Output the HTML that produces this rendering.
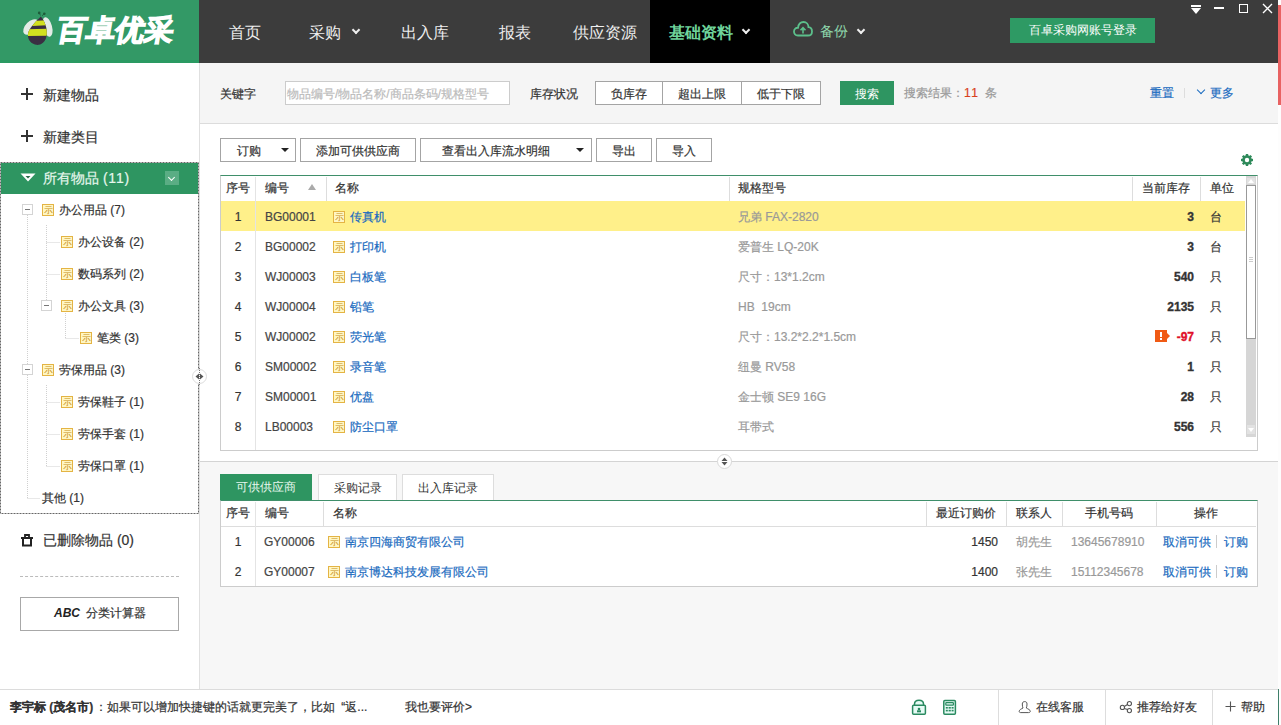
<!DOCTYPE html>
<html><head><meta charset="utf-8">
<style>
*{box-sizing:border-box;margin:0;padding:0}
html,body{width:1281px;height:725px;overflow:hidden;background:#fff}
body{position:relative;font-family:"Liberation Sans",sans-serif;font-size:12px;color:#333}
.a{position:absolute;white-space:nowrap}
.nav{position:absolute;top:23px;font-size:16px;line-height:20px;color:#eee;white-space:nowrap}
.chev{position:absolute;width:6px;height:6px;border-right:2px solid #eee;border-bottom:2px solid #eee;transform:rotate(45deg)}
.plus{position:absolute;width:12px;height:12px}
.plus:before{content:"";position:absolute;left:0;top:5px;width:12px;height:2px;background:#333}
.plus:after{content:"";position:absolute;left:5px;top:0;width:2px;height:12px;background:#333}
.ti{position:absolute;font-size:12px;line-height:16px;color:#333;white-space:nowrap}
.ic{position:absolute;width:12px;height:12px;border:1px solid #e4b444;background:#fff6c4}
.ic:after{content:"示";position:absolute;left:1px;top:0;font-size:9px;line-height:10px;color:#c89018}
.mb{position:absolute;width:11px;height:11px;border:1px solid #d4d4d4;background:#fff}
.mb:after{content:"";position:absolute;left:2px;top:4px;width:5px;height:1px;background:#777}
.vl{position:absolute;width:0;border-left:1px dotted #c4c4c4}
.hl{position:absolute;height:0;border-top:1px dotted #c4c4c4}
.btn{position:absolute;height:24px;border:1px solid #a4a4a4;background:#fff;font-size:12px;line-height:24px;color:#333;text-align:center;white-space:nowrap}
.caret{position:absolute;width:0;height:0;border-left:4px solid transparent;border-right:4px solid transparent;border-top:4px solid #222}
.hd{position:absolute;font-size:12px;line-height:16px;color:#333;white-space:nowrap}
.cl{position:absolute;width:1px;background:#ddd}
.rl{position:absolute;height:1px;background:#ddd}
.hd,.ti,.btn{-webkit-text-stroke:0.2px currentColor}
.lk{color:#1a6bc0}
.gy{color:#999}
.b{font-weight:bold;-webkit-text-stroke:0.35px currentColor}
</style></head><body>
<!-- backgrounds -->
<div class="a" style="left:0;top:0;width:1278px;height:63px;background:#3c3c3c"></div>
<div class="a" style="left:0;top:0;width:199px;height:63px;background:#339966"></div><div class="a" style="left:0;top:60px;width:199px;height:3px;background:#2a9a62"></div>
<div class="a" style="left:0;top:63px;width:199px;height:626px;background:#fff"></div>
<div class="a" style="left:199px;top:63px;width:1px;height:626px;background:#e0e0e0"></div>
<div class="a" style="left:200px;top:63px;width:1078px;height:60px;background:#f5f5f5"></div>
<div class="a" style="left:200px;top:123px;width:1078px;height:1px;background:#dcdcdc"></div>
<div class="a" style="left:200px;top:124px;width:1078px;height:337px;background:#fff"></div>
<div class="a" style="left:200px;top:461px;width:1078px;height:1px;background:#d4d4d4"></div>
<div class="a" style="left:200px;top:462px;width:1078px;height:227px;background:#f7f7f7"></div>
<div class="a" style="left:0;top:689px;width:1278px;height:1px;background:#dcdcdc"></div>
<div class="a" style="left:0;top:690px;width:1278px;height:35px;background:#fff"></div>
<div class="a" style="left:1278px;top:0;width:3px;height:725px;background:#fdfdfd"></div><div class="a" style="left:1278px;top:689px;width:1px;height:36px;background:#3f7f6a"></div>
<div class="a" style="left:1278px;top:5px;width:3px;height:100px;background:#e86262"></div>

<svg class="a" style="left:20px;top:8px" width="40" height="42" viewBox="20 8 40 42">
<circle cx="39.2" cy="12.9" r="1.3" fill="#1d5a3a"/><circle cx="44.3" cy="13.8" r="1.3" fill="#1d5a3a"/>
<path d="M40.5 15.5 L39.5 13.5 M42 15.8 L44 14" stroke="#1d5a3a" stroke-width="0.8"/>
<ellipse cx="31" cy="27" rx="5.5" ry="9.5" transform="rotate(45 31 27)" fill="#e4ebe6"/>
<ellipse cx="47.5" cy="27" rx="4.5" ry="10" transform="rotate(-15 47.5 27)" fill="#e4ebe6"/>
<clipPath id="bc"><path d="M40.8 16.5 C44 20 48 28 46.5 36 C45.5 43 40 45.5 36 44.8 C31 44 27.5 40 28 34 C28.5 29 35 22 40.8 16.5 Z"/></clipPath>
<g clip-path="url(#bc)">
<rect x="20" y="10" width="40" height="40" fill="#3a2e42"/>
<path d="M20 21.5 L60 19.5 L60 24.5 L20 26.5 Z" fill="#d2e020"/>
<path d="M20 29.5 L60 28.5 L60 35.5 L20 36 Z" fill="#d2e020"/>
</g>
</svg>
<div class="a" style="left:55px;top:13px;font-size:29px;line-height:34px;font-weight:900;color:#fff;-webkit-text-stroke:1.3px #fff;transform:skewX(-10deg);transform-origin:0 100%;letter-spacing:0px">百卓优采</div>
<!-- header nav -->
<div class="nav" style="left:229px">首页</div>
<div class="nav" style="left:309px">采购</div><div class="chev" style="left:353px;top:27px"></div>
<div class="nav" style="left:401px">出入库</div>
<div class="nav" style="left:499px">报表</div>
<div class="nav" style="left:573px">供应资源</div>
<div class="a" style="left:650px;top:0;width:120px;height:63px;background:#000"></div>
<div class="nav" style="left:669px;color:#6fd49b;font-weight:bold">基础资料</div><div class="chev" style="left:743px;top:27px"></div>
<div class="nav" style="left:820px;top:21px;font-size:14px;color:#8fd8ac">备份</div><div class="chev" style="left:858px;top:27px"></div>
<div class="a" style="left:1010px;top:18px;width:145px;height:25px;background:#2e9a64;color:#fff;font-size:12px;line-height:25px;text-align:center">百卓采购网账号登录</div>

<div class="a" style="left:1191px;top:5px;width:10px;height:2px;background:#fff"></div>
<div class="a" style="left:1191px;top:8px;width:0;height:0;border-left:5px solid transparent;border-right:5px solid transparent;border-top:6px solid #fff"></div>
<div class="a" style="left:1214px;top:7px;width:10px;height:1.5px;background:#fff"></div>
<div class="a" style="left:1239px;top:4px;width:9px;height:9px;border:1.5px solid #fff"></div>
<svg class="a" style="left:1262px;top:3px" width="11" height="11"><path d="M1 1 L10 10 M10 1 L1 10" stroke="#fff" stroke-width="1.4"/></svg>
<svg class="a" style="left:793px;top:21px" width="20" height="16" viewBox="0 0 20 16"><path d="M5 14.5 C2 14.5 1 12.5 1 10.5 C1 8 3 6.5 5 6.8 C5.5 3 8 1 10.5 1 C13.5 1 15.5 3.5 15.5 6.2 C17.8 6.4 19 8.3 19 10.4 C19 12.8 17.5 14.5 15 14.5 Z" fill="none" stroke="#5cbf8b" stroke-width="1.8"/><path d="M10 12.5 V7 M7.5 9.2 L10 6.7 L12.5 9.2" fill="none" stroke="#5cbf8b" stroke-width="1.6"/></svg>
<!-- sidebar -->
<div class="plus" style="left:21px;top:88px"></div><div class="ti" style="left:43px;top:87px;font-size:14px">新建物品</div>
<div class="plus" style="left:21px;top:130px"></div><div class="ti" style="left:43px;top:129px;font-size:14px">新建类目</div>
<svg class="a" style="left:0;top:162px" width="199" height="352"><rect x="0.5" y="0.5" width="198" height="351" fill="none" stroke="#666" stroke-dasharray="2 1"/></svg>
<div class="a" style="left:1px;top:163px;width:197px;height:31px;background:#2e9561"></div>
<div class="ti" style="left:43px;top:170px;font-size:14px;color:#e6f7ed">所有物品 <span style="letter-spacing:0.8px">(11)</span></div>
<div class="a" style="left:165px;top:171px;width:14px;height:14px;background:#5aad84"></div>

<svg class="a" style="left:0;top:0" width="200" height="689">
<g stroke="#d0d0d0" stroke-width="1" stroke-dasharray="1 1" fill="none">
<path d="M27.5 215 V498 M27.5 498.5 H40"/>
<path d="M46.5 225 V300 M46.5 242.5 H60 M46.5 274.5 H60"/>
<path d="M65.5 311 V338 M65.5 338.5 H79"/>
<path d="M46.5 385 V466 M46.5 402.5 H60 M46.5 434.5 H60 M46.5 466.5 H60"/>
</g>
</svg>
<svg class="a" style="left:19px;top:172px" width="18" height="11"><path d="M1.5 1.5 H16.5 L9 9.5 Z" fill="#fff"/><path d="M6.5 4 H11.5 L9 6.6 Z" fill="#2d6a4a"/></svg>
<div class="a" style="left:169px;top:175px;width:5px;height:5px;border-right:1.3px solid #fff;border-bottom:1.3px solid #fff;transform:rotate(45deg)"></div>
<svg class="a" style="left:19px;top:532px" width="16" height="16" viewBox="19 532 16 16"><path d="M25 537.5 V535 H29 V537.5" fill="none" stroke="#222" stroke-width="1.8"/><path d="M21 538 H33" stroke="#222" stroke-width="2"/><path d="M23 539 V545.5 H31 V539" fill="none" stroke="#222" stroke-width="2"/></svg>
<div class="mb" style="left:22px;top:204px"></div><div class="ic" style="left:42px;top:204px"></div><div class="ti" style="left:59px;top:202px">办公用品 (7)</div>
<div class="ic" style="left:61px;top:236px"></div><div class="ti" style="left:78px;top:234px">办公设备 (2)</div>
<div class="ic" style="left:61px;top:268px"></div><div class="ti" style="left:78px;top:266px">数码系列 (2)</div>
<div class="mb" style="left:41px;top:300px"></div><div class="ic" style="left:61px;top:300px"></div><div class="ti" style="left:78px;top:298px">办公文具 (3)</div>
<div class="ic" style="left:80px;top:332px"></div><div class="ti" style="left:97px;top:330px">笔类 (3)</div>
<div class="mb" style="left:22px;top:364px"></div><div class="ic" style="left:42px;top:364px"></div><div class="ti" style="left:59px;top:362px">劳保用品 (3)</div>
<div class="ic" style="left:61px;top:396px"></div><div class="ti" style="left:78px;top:394px">劳保鞋子 (1)</div>
<div class="ic" style="left:61px;top:428px"></div><div class="ti" style="left:78px;top:426px">劳保手套 (1)</div>
<div class="ic" style="left:61px;top:460px"></div><div class="ti" style="left:78px;top:458px">劳保口罩 (1)</div>
<div class="ti" style="left:42px;top:490px">其他 (1)</div>

<div class="ti" style="left:43px;top:532px;font-size:14px">已删除物品 (0)</div>
<div class="a" style="left:20px;top:576px;width:159px;height:0;border-top:1px dashed #bbb"></div>
<div class="a" style="left:20px;top:597px;width:159px;height:34px;border:1px solid #a8a8a8;background:#fff"></div>
<div class="a" style="left:54px;top:605px;font-size:12px;line-height:16px;font-style:italic;font-weight:bold;color:#222">ABC</div>
<div class="ti" style="left:86px;top:605px">分类计算器</div>

<svg class="a" style="left:191px;top:368px" width="17" height="17"><circle cx="8.5" cy="8.5" r="7" fill="#fff" stroke="#dcdcdc"/><path d="M4.5 8.5 L8 5.5 V11.5 Z M12.5 8.5 L9 5.5 V11.5 Z" fill="#555"/><path d="M8.5 0 V17" stroke="#777" stroke-dasharray="1 1"/></svg>
<svg class="a" style="left:716px;top:453px" width="17" height="17"><circle cx="8.5" cy="8.5" r="7" fill="#fff" stroke="#d8d8d8"/><path d="M8.5 4.5 L5.5 8 H11.5 Z M8.5 12.5 L5.5 9 H11.5 Z" fill="#555"/></svg>
<!-- search panel -->
<div class="hd" style="left:220px;top:86px">关键字</div>
<div class="a" style="left:285px;top:81px;width:225px;height:24px;border:1px solid #ccc;background:#fff"></div>
<div class="hd" style="left:287px;top:86px;color:#bbb">物品编号/物品名称/商品条码/规格型号</div>
<div class="hd" style="left:530px;top:86px">库存状况</div>
<div class="btn" style="left:595px;top:81px;width:68px">负库存</div>
<div class="btn" style="left:662px;top:81px;width:80px">超出上限</div>
<div class="btn" style="left:741px;top:81px;width:80px">低于下限</div>
<div class="a" style="left:840px;top:81px;width:54px;height:24px;background:#2e9561;color:#fff;text-align:center;line-height:26px">搜索</div>
<div class="hd" style="left:904px;top:85px;color:#999">搜索结果：<span style="color:#d8401c;letter-spacing:1.5px">11</span><span style="margin-left:6px">条</span></div>
<div class="hd lk" style="left:1150px;top:85px">重置</div>
<div class="a" style="left:1184px;top:88px;width:1px;height:10px;background:#ddd"></div>
<div class="a" style="left:1198px;top:87px;width:6px;height:6px;border-right:1px solid #1a6bc0;border-bottom:1px solid #1a6bc0;transform:rotate(45deg)"></div>
<div class="hd lk" style="left:1210px;top:85px">更多</div>

<!-- toolbar -->
<div class="btn" style="left:220px;top:138px;width:76px;text-align:left;padding-left:16px">订购</div><div class="caret" style="left:281px;top:148px"></div>
<div class="btn" style="left:300px;top:138px;width:116px">添加可供供应商</div>
<div class="btn" style="left:420px;top:138px;width:172px;text-align:left;padding-left:21px">查看出入库流水明细</div><div class="caret" style="left:576px;top:148px"></div>
<div class="btn" style="left:596px;top:138px;width:56px">导出</div>
<div class="btn" style="left:656px;top:138px;width:56px">导入</div>
<svg class="a" style="left:1240px;top:153px" width="14" height="14" viewBox="-7 -7 14 14"><g fill="#2e8a5a"><rect x="-1.2" y="-6" width="2.4" height="12"/><rect x="-1.2" y="-6" width="2.4" height="12" transform="rotate(45)"/><rect x="-1.2" y="-6" width="2.4" height="12" transform="rotate(90)"/><rect x="-1.2" y="-6" width="2.4" height="12" transform="rotate(135)"/></g><circle r="3.6" fill="none" stroke="#2e8a5a" stroke-width="2.4"/><circle r="2.2" fill="#fff"/></svg>

<!-- upper table -->
<div class="a" style="left:220px;top:175px;width:1038px;height:276px;border:1px solid #ccc;border-top:1px solid #3f8f6a;background:#fff"></div>
<div class="rl" style="left:221px;top:201px;width:1024px"></div>
<div class="a" style="left:221px;top:201px;width:1024px;height:30px;background:#fff08a"></div>
<div class="cl" style="left:255px;top:177px;height:273px;background:#e4e4e4"></div>
<div class="cl" style="left:326px;top:177px;height:24px"></div>
<div class="cl" style="left:729px;top:177px;height:24px"></div>
<div class="cl" style="left:1132px;top:177px;height:24px"></div>
<div class="cl" style="left:1200px;top:177px;height:24px"></div>
<div class="hd" style="left:226px;top:180px">序号</div>
<div class="hd" style="left:265px;top:180px">编号</div>
<div class="a" style="left:308px;top:184px;width:0;height:0;border-left:4px solid transparent;border-right:4px solid transparent;border-bottom:6px solid #aaa"></div>
<div class="hd" style="left:335px;top:180px">名称</div>
<div class="hd" style="left:738px;top:180px">规格型号</div>
<div class="hd" style="left:1142px;top:180px">当前库存</div>
<div class="hd" style="left:1210px;top:180px">单位</div>
<div class="hd" style="left:221px;top:209px;width:34px;text-align:center">1</div>
<div class="hd" style="left:265px;top:209px;color:#444">BG00001</div>
<div class="ic" style="left:333px;top:211px"></div><div class="hd lk" style="left:350px;top:209px">传真机</div>
<div class="hd gy" style="left:738px;top:209px">兄弟 FAX-2820</div>
<div class="hd b" style="left:1094px;top:209px;width:100px;text-align:right">3</div>
<div class="hd" style="left:1210px;top:209px">台</div>
<div class="hd" style="left:221px;top:239px;width:34px;text-align:center">2</div>
<div class="hd" style="left:265px;top:239px;color:#444">BG00002</div>
<div class="ic" style="left:333px;top:241px"></div><div class="hd lk" style="left:350px;top:239px">打印机</div>
<div class="hd gy" style="left:738px;top:239px">爱普生 LQ-20K</div>
<div class="hd b" style="left:1094px;top:239px;width:100px;text-align:right">3</div>
<div class="hd" style="left:1210px;top:239px">台</div>
<div class="hd" style="left:221px;top:269px;width:34px;text-align:center">3</div>
<div class="hd" style="left:265px;top:269px;color:#444">WJ00003</div>
<div class="ic" style="left:333px;top:271px"></div><div class="hd lk" style="left:350px;top:269px">白板笔</div>
<div class="hd gy" style="left:738px;top:269px">尺寸：13*1.2cm</div>
<div class="hd b" style="left:1094px;top:269px;width:100px;text-align:right">540</div>
<div class="hd" style="left:1210px;top:269px">只</div>
<div class="hd" style="left:221px;top:299px;width:34px;text-align:center">4</div>
<div class="hd" style="left:265px;top:299px;color:#444">WJ00004</div>
<div class="ic" style="left:333px;top:301px"></div><div class="hd lk" style="left:350px;top:299px">铅笔</div>
<div class="hd gy" style="left:738px;top:299px">HB&nbsp; 19cm</div>
<div class="hd b" style="left:1094px;top:299px;width:100px;text-align:right">2135</div>
<div class="hd" style="left:1210px;top:299px">只</div>
<div class="hd" style="left:221px;top:329px;width:34px;text-align:center">5</div>
<div class="hd" style="left:265px;top:329px;color:#444">WJ00002</div>
<div class="ic" style="left:333px;top:331px"></div><div class="hd lk" style="left:350px;top:329px">荧光笔</div>
<div class="hd gy" style="left:738px;top:329px">尺寸：13.2*2.2*1.5cm</div>
<div class="a" style="left:1155px;top:330px;width:12px;height:12px;background:#f05a14"></div><div class="a" style="left:1167px;top:333px;width:0;height:0;border-top:3px solid transparent;border-bottom:3px solid transparent;border-left:3px solid #f05a14"></div><div class="a" style="left:1160px;top:332px;width:2px;height:5px;background:#fff"></div><div class="a" style="left:1160px;top:338px;width:2px;height:2px;background:#fff"></div>
<div class="hd b" style="left:1094px;top:329px;width:100px;text-align:right;color:#e0102a">-97</div>
<div class="hd" style="left:1210px;top:329px">只</div>
<div class="hd" style="left:221px;top:359px;width:34px;text-align:center">6</div>
<div class="hd" style="left:265px;top:359px;color:#444">SM00002</div>
<div class="ic" style="left:333px;top:361px"></div><div class="hd lk" style="left:350px;top:359px">录音笔</div>
<div class="hd gy" style="left:738px;top:359px">纽曼 RV58</div>
<div class="hd b" style="left:1094px;top:359px;width:100px;text-align:right">1</div>
<div class="hd" style="left:1210px;top:359px">只</div>
<div class="hd" style="left:221px;top:389px;width:34px;text-align:center">7</div>
<div class="hd" style="left:265px;top:389px;color:#444">SM00001</div>
<div class="ic" style="left:333px;top:391px"></div><div class="hd lk" style="left:350px;top:389px">优盘</div>
<div class="hd gy" style="left:738px;top:389px">金士顿 SE9 16G</div>
<div class="hd b" style="left:1094px;top:389px;width:100px;text-align:right">28</div>
<div class="hd" style="left:1210px;top:389px">只</div>
<div class="hd" style="left:221px;top:419px;width:34px;text-align:center">8</div>
<div class="hd" style="left:265px;top:419px;color:#444">LB00003</div>
<div class="ic" style="left:333px;top:421px"></div><div class="hd lk" style="left:350px;top:419px">防尘口罩</div>
<div class="hd gy" style="left:738px;top:419px">耳带式</div>
<div class="hd b" style="left:1094px;top:419px;width:100px;text-align:right">556</div>
<div class="hd" style="left:1210px;top:419px">只</div>
<!-- scrollbar -->
<div class="a" style="left:1246px;top:176px;width:10px;height:261px;background:#d6d6d6"></div>
<div class="a" style="left:1247px;top:178px;width:8px;height:6px;background:#e2e2e2"></div>
<div class="a" style="left:1248px;top:179px;width:0;height:0;border-left:3px solid transparent;border-right:3px solid transparent;border-bottom:4px solid #fff"></div>
<div class="a" style="left:1246px;top:185px;width:10px;height:154px;background:#fff;border:1px solid #999"></div>
<div class="a" style="left:1247px;top:425px;width:8px;height:9px;background:#e2e2e2"></div>
<div class="a" style="left:1248px;top:428px;width:0;height:0;border-left:3px solid transparent;border-right:3px solid transparent;border-top:4px solid #fff"></div>
<div class="a" style="left:1249px;top:257px;width:4px;height:1px;background:#ccc"></div><div class="a" style="left:1249px;top:259px;width:4px;height:1px;background:#ccc"></div><div class="a" style="left:1249px;top:261px;width:4px;height:1px;background:#ccc"></div>

<!-- lower tabs -->
<div class="a" style="left:220px;top:474px;width:92px;height:27px;background:#2e9561;color:#e6f7ed;text-align:center;line-height:26px">可供供应商</div>
<div class="a" style="left:318px;top:474px;width:79px;height:27px;background:#fff;border:1px solid #ddd;border-bottom:none;text-align:center;line-height:26px">采购记录</div>
<div class="a" style="left:402px;top:474px;width:92px;height:27px;background:#fff;border:1px solid #ddd;border-bottom:none;text-align:center;line-height:26px">出入库记录</div>
<div class="a" style="left:220px;top:500px;width:1038px;height:87px;border:1px solid #ccc;border-top:1px solid #3f8f6a;background:#fff"></div>
<div class="rl" style="left:221px;top:526px;width:1035px"></div>
<div class="cl" style="left:255px;top:502px;height:84px;background:#e4e4e4"></div>
<div class="cl" style="left:323px;top:502px;height:24px"></div>
<div class="cl" style="left:926px;top:502px;height:24px"></div>
<div class="cl" style="left:1006px;top:502px;height:24px"></div>
<div class="cl" style="left:1062px;top:502px;height:24px"></div>
<div class="cl" style="left:1156px;top:502px;height:24px"></div>
<div class="hd" style="left:226px;top:505px">序号</div>
<div class="hd" style="left:265px;top:505px">编号</div>
<div class="hd" style="left:333px;top:505px">名称</div>
<div class="hd" style="left:936px;top:505px">最近订购价</div>
<div class="hd" style="left:1016px;top:505px">联系人</div>
<div class="hd" style="left:1085px;top:505px">手机号码</div>
<div class="hd" style="left:1194px;top:505px">操作</div>

<div class="hd" style="left:221px;top:534px;width:34px;text-align:center">1</div>
<div class="hd" style="left:264px;top:534px;color:#444">GY00006</div>
<div class="ic" style="left:328px;top:536px"></div><div class="hd lk" style="left:345px;top:534px">南京四海商贸有限公司</div>
<div class="hd" style="left:898px;top:534px;width:100px;text-align:right">1450</div>
<div class="hd gy" style="left:1016px;top:534px">胡先生</div>
<div class="hd gy" style="left:1071px;top:534px">13645678910</div>
<div class="hd lk" style="left:1163px;top:534px">取消可供</div><div class="a" style="left:1216px;top:535px;width:1px;height:13px;background:#ccc"></div><div class="hd lk" style="left:1224px;top:534px">订购</div>
<div class="hd" style="left:221px;top:564px;width:34px;text-align:center">2</div>
<div class="hd" style="left:264px;top:564px;color:#444">GY00007</div>
<div class="ic" style="left:328px;top:566px"></div><div class="hd lk" style="left:345px;top:564px">南京博达科技发展有限公司</div>
<div class="hd" style="left:898px;top:564px;width:100px;text-align:right">1400</div>
<div class="hd gy" style="left:1016px;top:564px">张先生</div>
<div class="hd gy" style="left:1071px;top:564px">15112345678</div>
<div class="hd lk" style="left:1163px;top:564px">取消可供</div><div class="a" style="left:1216px;top:565px;width:1px;height:13px;background:#ccc"></div><div class="hd lk" style="left:1224px;top:564px">订购</div>
<!-- status bar -->
<svg class="a" style="left:910px;top:698px" width="18" height="18" viewBox="910 698 18 18"><path d="M914.5 705.5 V704 C914.5 701.5 916.5 700.2 919 700.2 C921.5 700.2 923.5 701.5 923.5 704 V705.5" fill="#e6fbf5" stroke="#2a8a60" stroke-width="1.5"/><rect x="912.6" y="705.3" width="12.8" height="9" rx="1" fill="#e6fbf5" stroke="#2a8a60" stroke-width="1.5"/><circle cx="919" cy="709" r="1.3" fill="#2a8a60"/><rect x="917" y="710.3" width="4" height="2" fill="#2a8a60"/></svg>
<svg class="a" style="left:941px;top:698px" width="18" height="18" viewBox="941 698 18 18"><rect x="943.8" y="700.6" width="11.6" height="13.6" rx="1" fill="#e6fbf5" stroke="#2a8a60" stroke-width="1.5"/><rect x="945.8" y="702.6" width="7.6" height="2.6" rx="0.6" fill="none" stroke="#2a8a60" stroke-width="1.2"/><g fill="#2a8a60"><rect x="945.8" y="707" width="2" height="1.6"/><rect x="948.6" y="707" width="2.2" height="1.6"/><rect x="951.6" y="707" width="2" height="1.6"/><rect x="945.8" y="709.8" width="2" height="1.6"/><rect x="948.6" y="709.8" width="2.2" height="1.6"/><rect x="951.6" y="709.8" width="2" height="1.6"/></g></svg>
<svg class="a" style="left:1017px;top:699px" width="16" height="16" viewBox="1017 699 16 16"><path d="M1023 708 C1022.5 706.8 1022.3 705.8 1022.3 704 C1022.3 702.3 1023.3 701.6 1024.7 701.6 C1026.1 701.6 1027 702.3 1027 704 C1027 705.8 1026.8 706.8 1026.3 708 C1028 709 1030.3 709.8 1030.3 711.3 C1030.3 712.3 1029.5 712.6 1028.5 712.6 H1020.8 C1019.8 712.6 1019.2 712.3 1019.2 711.3 C1019.2 709.8 1021.3 709 1023 708 Z" fill="none" stroke="#555" stroke-width="1"/></svg>
<svg class="a" style="left:1118px;top:700px" width="16" height="15" viewBox="1118 700 16 15"><g fill="none" stroke="#555" stroke-width="1.1"><circle cx="1122.4" cy="707.4" r="2.1"/><circle cx="1129.4" cy="703.6" r="2.1"/><circle cx="1129.4" cy="710.6" r="2.1"/><path d="M1124.3 706.4 L1127.5 704.6 M1124.3 708.4 L1127.5 709.6"/></g></svg>
<svg class="a" style="left:1225px;top:701px" width="11" height="11"><path d="M5.5 0.5 V10.5 M0.5 5.5 H10.5" stroke="#555" stroke-width="1.1"/></svg>

<div class="hd" style="left:10px;top:699px;font-size:12px"><b>李宇标 (茂名市)</b><span style="margin-left:2px">：如果可以增加快捷键的话就更完美了，比如</span><span style="margin-left:6px">“返...</span></div>
<div class="hd" style="left:405px;top:699px;font-size:12px">我也要评价&gt;</div>
<div class="a" style="left:998px;top:690px;width:1px;height:35px;background:#ddd"></div>
<div class="a" style="left:1105px;top:690px;width:1px;height:35px;background:#ddd"></div>
<div class="a" style="left:1212px;top:690px;width:1px;height:35px;background:#ddd"></div>
<div class="hd" style="left:1036px;top:699px">在线客服</div>
<div class="hd" style="left:1137px;top:699px">推荐给好友</div>
<div class="hd" style="left:1241px;top:699px">帮助</div>
</body></html>
